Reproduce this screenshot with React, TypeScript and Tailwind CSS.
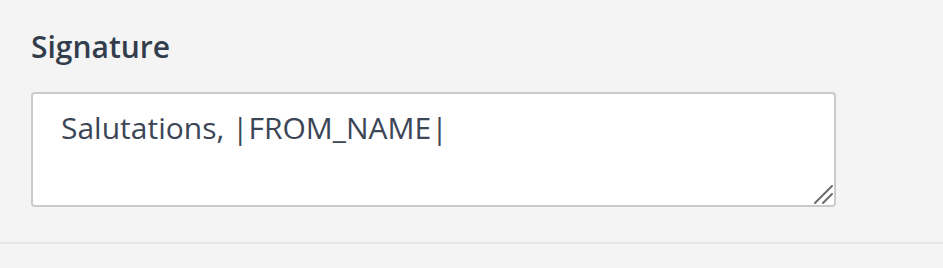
export default function App() {
  return (
    <div className="w-[943px] h-[268px] bg-[#f4f4f4] font-['Open_Sans',sans-serif] overflow-hidden">
      <div className="pl-[31px] pr-[107px] pt-[28px] pb-[35px] border-b-2 border-[#e6e7ea]">
        <label className="block text-[30px] font-semibold leading-[38px] text-[#333e4c]">
          Signature
        </label>
        <div className="relative mt-[26px] w-[805px]">
          <textarea
            defaultValue="Salutations, |FROM_NAME|"
            className="block w-full h-[115px] rounded-[4px] border-2 border-[#cbcbcb] bg-white pl-[28px] pr-[28px] pt-[14px] pb-[8px] text-[30px] leading-[40px] text-[#3c4656] outline-none resize-none font-['Open_Sans',sans-serif]"
          />
          {/* resize grip */}
          <svg
            className="absolute right-[3px] bottom-[3px] pointer-events-none"
            width="20"
            height="20"
            viewBox="0 0 20 20"
          >
            <path d="M2 19 L19 2" stroke="#6b6b6b" strokeWidth="2" strokeLinecap="round" />
            <path d="M10 19 L19 10" stroke="#6b6b6b" strokeWidth="2" strokeLinecap="round" />
          </svg>
        </div>
      </div>
    </div>
  );
}
